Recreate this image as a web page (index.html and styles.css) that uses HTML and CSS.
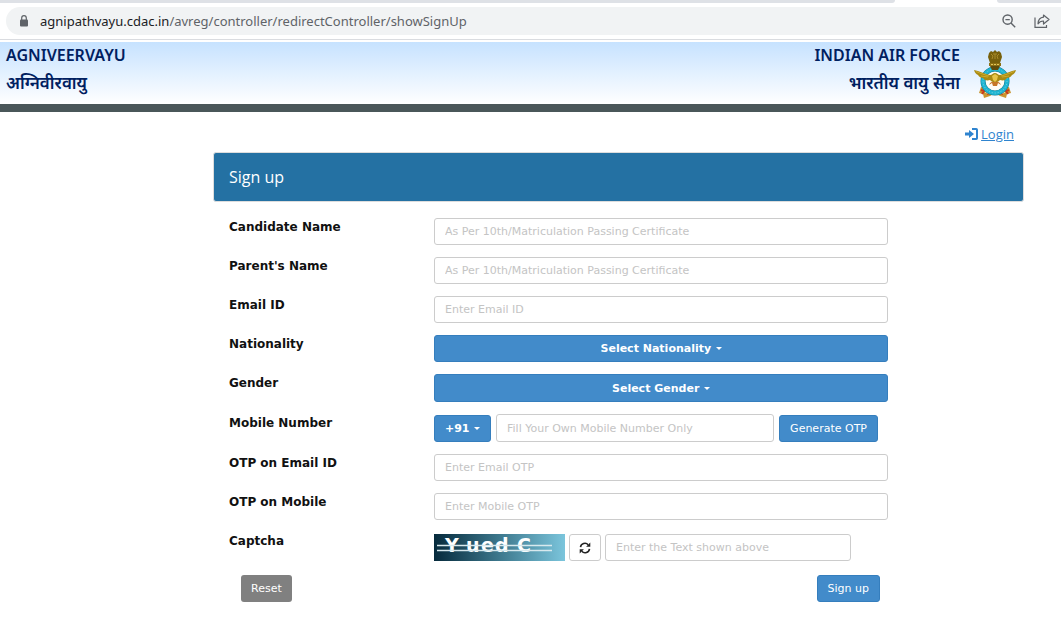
FILE: index.html
```html
<!DOCTYPE html>
<html lang="en">
<head>
    <meta charset="UTF-8">
    <meta name="viewport" content="width=device-width, initial-scale=1.0">
    <title>Agniveervayu - Sign up</title>
    <link rel="stylesheet" href="styles.css">
</head>
<body>
    <div class="tab-strip">
        <div class="tab-before"></div>
        <div class="tab-after"></div>
    </div>
    <div class="toolbar">
        <div class="address-bar">
            <svg class="lock" width="10" height="12" viewBox="0 0 10 12">
                <rect x="1" y="4.5" width="8" height="7" rx="1" fill="#5f6368"/>
                <path d="M2.7 5V3a2.3 2.3 0 0 1 4.6 0v2" fill="none" stroke="#5f6368" stroke-width="1.2"/>
            </svg>
            <div class="url"><span class="host">agnipathvayu.cdac.in</span>/avreg/controller/redirectController/showSignUp</div>
            <button class="tool" type="button" aria-label="Zoom">
                <svg width="14" height="14" viewBox="0 0 14 14" fill="none" stroke="#5f6368" stroke-width="1.4">
                    <circle cx="5.6" cy="5.6" r="4.6"/>
                    <path d="M3.4 5.6h4.4M9 9l4.2 4.2"/>
                </svg>
            </button>
            <button class="tool" type="button" aria-label="Share">
                <svg width="16" height="14" viewBox="0 0 16 14" fill="none" stroke="#5f6368" stroke-width="1.2">
                    <path d="M1 3.5v9.9h11.5V11"/>
                    <path d="M9.5 1l5.5 4.500-5.500 4.500V7C7 6.900 5.300 7.800 4 9.800 4.200 6 6 3.500 9.500 3.200z" stroke-linejoin="round"/>
                </svg>
            </button>
        </div>
    </div>

    <header class="header">
        <div class="titles">
            <div>AGNIVEERVAYU</div>
            <div lang="hi">अग्निवीरवायु</div>
        </div>
        <div class="titles titles-right">
            <div>INDIAN AIR FORCE</div>
            <div lang="hi">भारतीय वायु सेना</div>
        </div>
        <svg class="emblem" width="44" height="50" viewBox="0 0 44 50" role="img" aria-label="Indian Air Force crest">
            <!-- scroll -->
            <path d="M8 38l7 1 7 4 7-4 7-1 2 6-4 1-1 4-6-2-5-3-5 3-6 2-1-4-4-1z" fill="#c9952f"/>
            <path d="M8 41l3 1-2 3M36 41l-3 1 2 3M14 45l4-2M30 45l-4-2" stroke="#c8391d" stroke-width="2" fill="none"/>
            <path d="M12 43l3 1M32 43l-3 1" stroke="#f0dc9a" stroke-width="1.500"/>
            <!-- ring -->
            <circle cx="22" cy="32" r="12" fill="#fffdf5" stroke="#16768b" stroke-width="5"/>
            <circle cx="22" cy="32" r="12" fill="none" stroke="#20b5d2" stroke-width="4"/>
            <circle cx="22" cy="32" r="12" fill="none" stroke="#7fd6e4" stroke-width="1" stroke-dasharray="1 2"/>
            <path d="M16 36c1-3 4-4 6-4s5 1 6 4l-3-2-1 3h-4l-1-3z" fill="#c77727"/>
            <!-- wings -->
            <path d="M1 21c5 1 11 4 16 5 2 0 3-2 5-2s3 2 5 2c5-1 11-4 16-5-1 3-2 4-4 5-1 2-3 3-5 3-1 2-4 3-7 2-2 2-3 2-5 2s-3 0-5-2c-3 1-6 0-7-2-2 0-4-1-5-3-2-1-3-2-4-5z" fill="#a98a12"/>
            <path d="M3 22.500c5 2 9 3.500 13 4.500M41 22.500c-5 2-9 3.500-13 4.500M8 27l7 1M36 27l-7 1" stroke="#cdab2c" stroke-width="1" fill="none"/>
            <path d="M19 27l3-2 3 2-1 4-2 2-2-2z" fill="#e6c549"/>
            <!-- lion capital -->
            <path d="M16 4l2-2 2 1 2-2 2 2 2-1 2 2 1 4-1 3-1 3H17l-1-3-1-3z" fill="#77600c"/>
            <path d="M18 5l2 2-1 3M26 5l-2 2 1 3M20 5h4M22 5v5" stroke="#a98b2a" stroke-width="1" fill="none"/>
            <path d="M16 14h12v3H16z" fill="#8d7012"/>
            <path d="M18 15.500h2m1 0h2m1 0h2" stroke="#e1c65c" stroke-width="1"/>
            <path d="M17 17h10l-2 4H19z" fill="#5e4b0b"/>
        </svg>
    </header>

    <main class="page">
        <div class="login-row">
            <svg width="13" height="12" viewBox="0 0 13 12">
                <path d="M7 1h4.200q.8 0 .8.800v8.400q0 .8-.8.800H7" fill="none" stroke="#2f84cf" stroke-width="2"/>
                <path d="M0 4.500h4V2l5 4-5 4V7.500H0z" fill="#2f84cf"/>
            </svg>
            <a href="#login">Login</a>
        </div>

        <h1 class="panel-heading">Sign up</h1>

        <form class="signup-form">
            <div class="form-row">
                <label for="name">Candidate Name</label>
                <div class="field"><input class="form-control" id="name" type="text" placeholder="As Per 10th/Matriculation Passing Certificate"></div>
            </div>
            <div class="form-row">
                <label for="parent">Parent's Name</label>
                <div class="field"><input class="form-control" id="parent" type="text" placeholder="As Per 10th/Matriculation Passing Certificate"></div>
            </div>
            <div class="form-row">
                <label for="email">Email ID</label>
                <div class="field"><input class="form-control" id="email" type="email" placeholder="Enter Email ID"></div>
            </div>
            <div class="form-row">
                <label for="nationality">Nationality</label>
                <div class="field">
                    <div class="dropdown"><select id="nationality"><option>Select Nationality</option></select></div>
                </div>
            </div>
            <div class="form-row">
                <label for="gender">Gender</label>
                <div class="field">
                    <div class="dropdown tall"><select id="gender"><option>Select Gender</option></select></div>
                </div>
            </div>
            <div class="form-row">
                <label for="mobile">Mobile Number</label>
                <div class="field mobile">
                    <div class="dropdown code"><select aria-label="Country code"><option>+91</option></select></div>
                    <input class="form-control tall" id="mobile" type="tel" placeholder="Fill Your Own Mobile Number Only">
                    <button class="btn btn-primary" type="button">Generate OTP</button>
                </div>
            </div>
            <div class="form-row">
                <label for="email-otp">OTP on Email ID</label>
                <div class="field"><input class="form-control" id="email-otp" type="text" placeholder="Enter Email OTP"></div>
            </div>
            <div class="form-row">
                <label for="mobile-otp">OTP on Mobile</label>
                <div class="field"><input class="form-control" id="mobile-otp" type="text" placeholder="Enter Mobile OTP"></div>
            </div>
            <div class="form-row">
                <label for="captcha">Captcha</label>
                <div class="field captcha">
                    <svg class="captcha-image" width="131" height="27" viewBox="0 0 131 27">
                        <defs>
                            <linearGradient id="sea" x1="0" y1="0" x2="1" y2="0">
                                <stop offset="0" stop-color="#062a3c"/>
                                <stop offset="0.500" stop-color="#3d788d"/>
                                <stop offset="1" stop-color="#7bc5dc"/>
                            </linearGradient>
                        </defs>
                        <rect width="131" height="27" fill="url(#sea)"/>
                        <text class="captcha-text" y="18"><tspan x="11">Y</tspan> <tspan x="32">u</tspan><tspan x="47">e</tspan><tspan x="61">d</tspan> <tspan x="83">C</tspan></text>
                        <path d="M3 11.500h115M3 16.500h115" stroke="#d8e9ee" stroke-width="1.500"/>
                    </svg>
                    <button class="btn btn-default" type="button" aria-label="New captcha">
                        <svg width="12" height="12" viewBox="0 0 12 12">
                            <path d="M1.500 5.200A4.500 4.500 0 0 1 9.200 2.700M10.500 6.800A4.500 4.500 0 0 1 2.800 9.300" fill="none" stroke="#222" stroke-width="1.600"/>
                            <path d="M11.300.5v4.200H7.100zM.7 11.500V7.300h4.200z" fill="#222"/>
                        </svg>
                    </button>
                    <input class="form-control" id="captcha" type="text" placeholder="Enter the Text shown above">
                </div>
            </div>
            <div class="form-actions">
                <button class="btn btn-reset" type="reset">Reset</button>
                <button class="btn btn-primary" type="submit">Sign up</button>
            </div>
        </form>
    </main>
</body>
</html>
```
FILE: styles.css
```css
* {
    box-sizing: border-box;
}
body {
    margin: 0;
    background: white;
    color: #111;
    font-family: "DejaVu Sans", Verdana, sans-serif;
    font-size: 11px;
}
button {
    font-family: inherit;
    cursor: pointer;
}

/* browser bar */
.tab-strip {
    display: flex;
    justify-content: space-between;
    height: 3px;
}
.tab-before {
    flex: 1;
    background: #dee1e6;
    border-bottom-right-radius: 3px;
    margin-right: 102px;
}
.tab-after {
    width: 64px;
    background: #dee1e6;
    border-bottom-left-radius: 3px;
}
.toolbar {
    padding: 4px 0 4px 6px;
    border-bottom: 1px solid #dadce0;
    margin-bottom: 2px;
}
.address-bar {
    display: flex;
    align-items: center;
    height: 28px;
    padding: 0 11px 0 13px;
    background: #f1f3f4;
    border-radius: 14px 0 0 14px;
}
.url {
    flex: 1;
    margin-left: 11px;
    color: #5f6368;
    font-family: "Noto Sans", "Segoe UI", sans-serif;
    font-size: 13px;
}
.host {
    color: #202124;
}
.tool {
    display: flex;
    padding: 0;
    margin-left: 18px;
    border: none;
    background: none;
}

/* site header */
.header {
    display: flex;
    justify-content: space-between;
    height: 70px;
    padding: 0 44px 0 6px;
    background: linear-gradient(#c6e2ff, white);
    border-bottom: 8px solid #4a5759;
}
.titles {
    color: #002060;
    font-family: "Noto Sans", "Segoe UI", sans-serif;
    font-size: 16px;
    font-weight: 600;
    line-height: 27px;
}
.titles [lang="hi"] {
    font-size: 17px;
}
.titles-right {
    margin-left: auto;
    text-align: right;
}
.emblem {
    margin: 7px 0 0 13px;
}

/* sign up */
.page {
    padding: 0 37px 0 213px;
}
.login-row {
    display: flex;
    justify-content: flex-end;
    align-items: center;
    gap: 3px;
    height: 40px;
    padding: 4px 10px 0 0;
    font-family: "Open Sans", "Segoe UI", sans-serif;
    font-size: 13px;
}
.login-row a {
    color: #2f84cf;
}
.panel-heading {
    margin: 0;
    padding: 0 15px;
    border: 1px solid #ddd;
    border-radius: 3px;
    background: #2471a3;
    color: white;
    font-family: "Open Sans", "Segoe UI", sans-serif;
    font-size: 16px;
    font-weight: normal;
    line-height: 48px;
}
.signup-form {
    padding: 16px 136px 0 16px;
}
.form-row {
    display: flex;
    align-items: flex-start;
    margin-bottom: 12px;
}
.form-row label {
    width: 205px;
    font-size: 12px;
    font-weight: bold;
    line-height: 18px;
}
.field {
    display: flex;
    flex: 1;
    gap: 5px;
}
.form-control {
    flex: 1;
    min-width: 0;
    height: 27px;
    padding: 0 10px;
    border: 1px solid #ccc;
    border-radius: 3px;
    background: white;
    font-family: inherit;
    font-size: 11px;
}
.form-control::placeholder {
    color: #c4c4c4;
}
.dropdown {
    display: flex;
    flex: 1;
    justify-content: center;
    align-items: center;
    gap: 4px;
    height: 27px;
    border: 1px solid #357ebd;
    border-radius: 3px;
    background: #428bca;
}
.dropdown select {
    appearance: none;
    padding: 0;
    border: none;
    background: none;
    color: white;
    font-family: inherit;
    font-size: 11px;
    font-weight: bold;
}
.dropdown::after {
    content: "";
    border: 3px solid transparent;
    border-top-color: white;
    border-bottom: none;
}
.tall {
    height: 28px;
}
.mobile {
    align-items: flex-end;
    padding-right: 10px;
}
.dropdown.code {
    flex: none;
    width: 57px;
}
.btn {
    height: 27px;
    padding: 0 10px;
    border: 1px solid transparent;
    border-radius: 3px;
    font-size: 11px;
}
.btn-primary {
    background: #428bca;
    border-color: #357ebd;
    color: white;
}
.btn-default {
    display: flex;
    align-items: center;
    background: white;
    border-color: #ccc;
    padding: 0 9px;
}
.btn-reset {
    padding: 0 9px;
    background: #808080;
    color: white;
}
.captcha {
    gap: 4px;
    padding: 2px 37px 0 0;
}
.captcha-text {
    fill: white;
    font-family: "DejaVu Sans", Verdana, sans-serif;
    font-size: 19px;
    font-weight: bold;
}
.form-actions {
    display: flex;
    justify-content: space-between;
    padding: 2px 8px 0 12px;
}
```
